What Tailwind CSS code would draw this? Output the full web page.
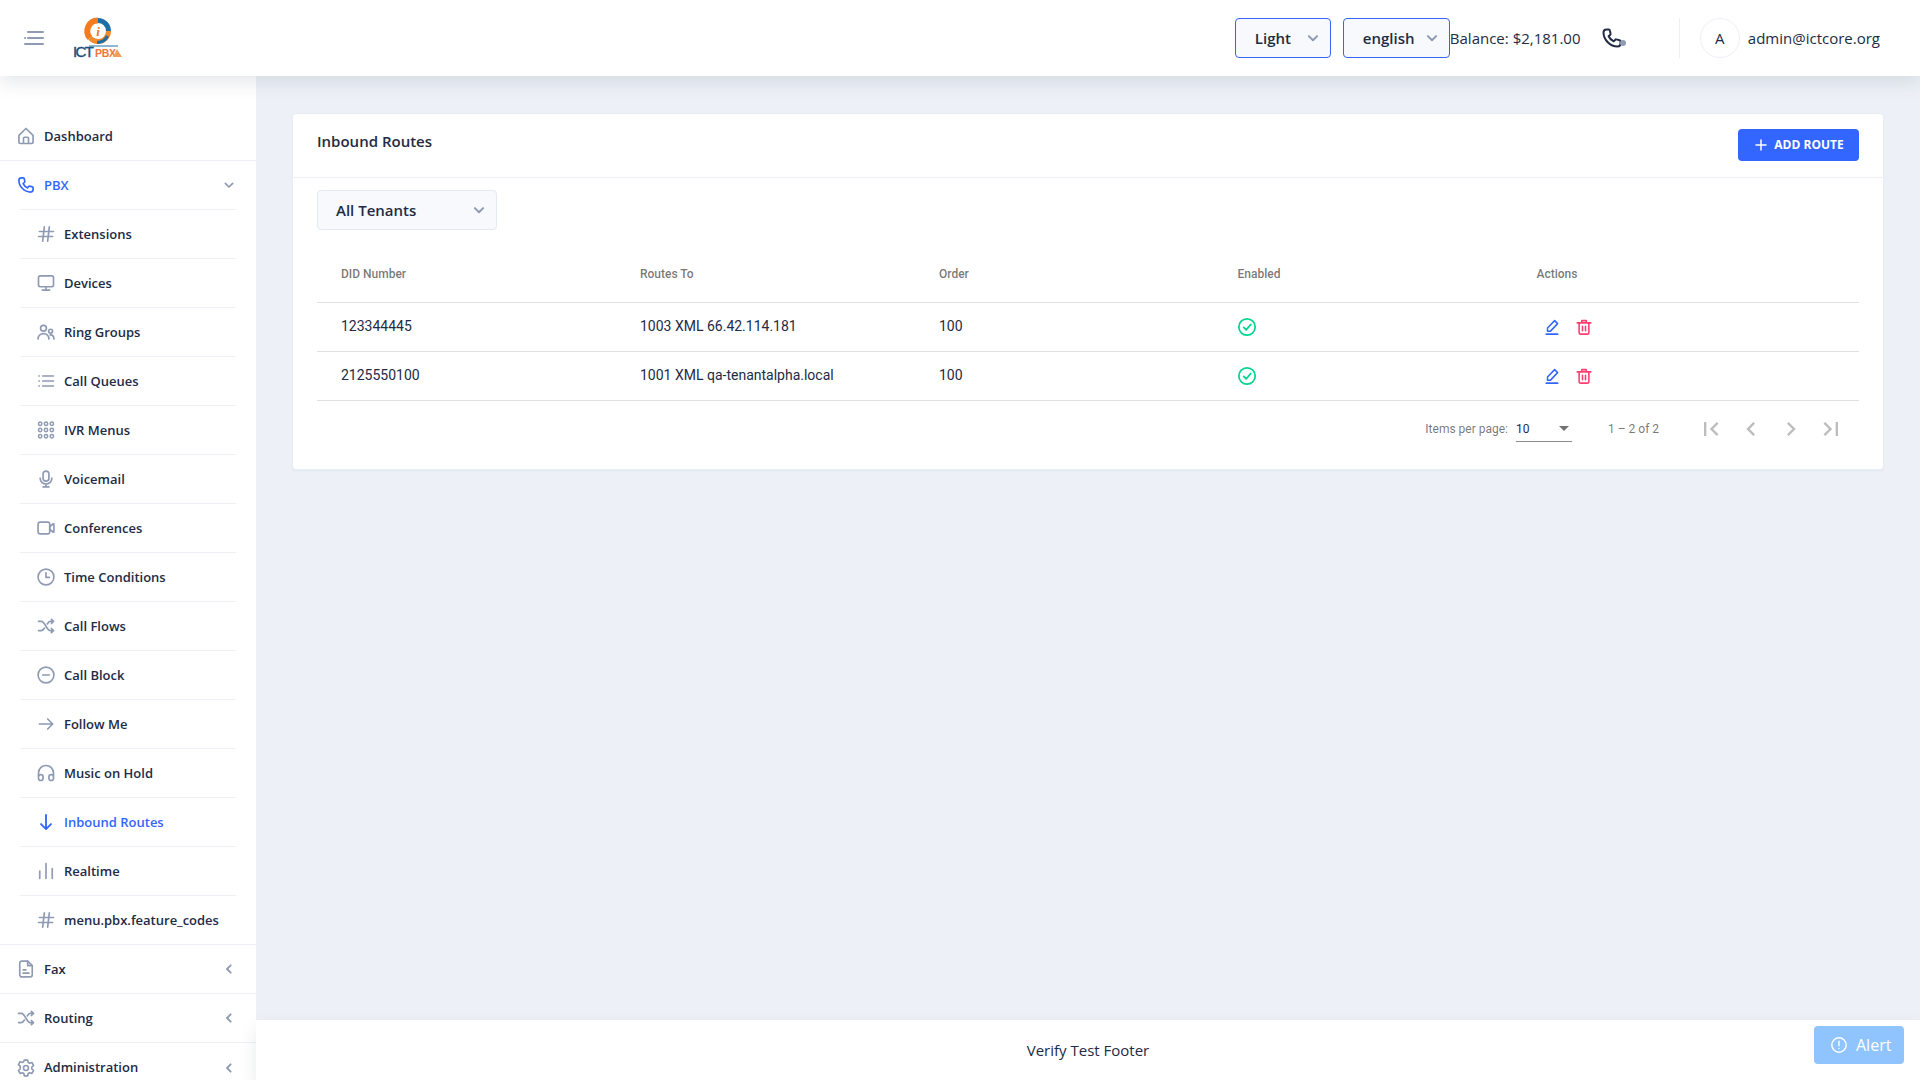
<!DOCTYPE html>
<html lang="en">
<head>
<meta charset="utf-8">
<title>Inbound Routes</title>
<script src="https://cdn.jsdelivr.net/npm/@tailwindcss/browser@4"></script>
</head>
<body class="h-screen w-screen overflow-hidden bg-[#edf1f7] font-['Open_Sans',sans-serif] text-[#222b45]">
<svg class="hidden" xmlns="http://www.w3.org/2000/svg">
  <defs>
    <symbol id="home" viewBox="0 0 24 24" fill="none" stroke="currentColor" stroke-width="2" stroke-linejoin="round"><path d="M3.500 11.200 12 3l8.500 8.200V19a2 2 0 0 1-2 2h-13a2 2 0 0 1-2-2z"/><path d="M9 21v-6.500a1 1 0 0 1 1-1h4a1 1 0 0 1 1 1V21"/></symbol>
    <symbol id="phone" viewBox="0 0 24 24" fill="none" stroke="currentColor" stroke-width="2" stroke-linejoin="round" stroke-linecap="round"><path d="M6.500 3.500h2.300a1 1 0 0 1 1 .8l.8 3.400a1 1 0 0 1-.3 1L8.600 10.300a11 11 0 0 0 5.100 5.100l1.600-1.700a1 1 0 0 1 1-.3l3.400.8a1 1 0 0 1 .8 1v2.300a3 3 0 0 1-3 3C10.200 20.500 3.500 13.800 3.500 6.500a3 3 0 0 1 3-3z"/></symbol>
    <symbol id="hash" viewBox="0 0 24 24" fill="none" stroke="currentColor" stroke-width="2" stroke-linecap="round"><path d="M4 9h17M3 15h17M10 3.500 8 20.500M16 3.500 14 20.500"/></symbol>
    <symbol id="monitor" viewBox="0 0 24 24" fill="none" stroke="currentColor" stroke-width="2" stroke-linecap="round" stroke-linejoin="round"><rect x="3" y="3.500" width="18" height="13" rx="2"/><path d="M12 16.500v4M7.500 20.500h9"/></symbol>
    <symbol id="people" viewBox="0 0 24 24" fill="none" stroke="currentColor" stroke-width="2" stroke-linecap="round"><circle cx="9" cy="7.500" r="3.500"/><circle cx="17.500" cy="11" r="2.300"/><path d="M2.500 20.500c0-4 2.800-6.500 6.500-6.500s6.500 2.500 6.500 6.500M17 15.500c2.800 0 4.500 2 4.500 5"/></symbol>
    <symbol id="list" viewBox="0 0 24 24" fill="none" stroke="currentColor" stroke-width="2" stroke-linecap="round"><path d="M8 6h13M8 12h13M8 18h13M3.500 6h.5M3.500 12h.5M3.500 18h.5"/></symbol>
    <symbol id="keypad" viewBox="0 0 24 24" fill="none" stroke="currentColor" stroke-width="1.800"><circle cx="5" cy="4.500" r="2"/><circle cx="12" cy="4.500" r="2"/><circle cx="19" cy="4.500" r="2"/><circle cx="5" cy="12" r="2"/><circle cx="12" cy="12" r="2"/><circle cx="19" cy="12" r="2"/><circle cx="5" cy="19.500" r="2"/><circle cx="12" cy="19.500" r="2"/><circle cx="19" cy="19.500" r="2"/></symbol>
    <symbol id="mic" viewBox="0 0 24 24" fill="none" stroke="currentColor" stroke-width="2" stroke-linecap="round"><rect x="8.500" y="2.500" width="7" height="12" rx="3.500"/><path d="M5 11a7 7 0 0 0 14 0M12 18v3.500M8.500 21.500h7"/></symbol>
    <symbol id="video" viewBox="0 0 24 24" fill="none" stroke="currentColor" stroke-width="2" stroke-linejoin="round"><rect x="2.500" y="5" width="14" height="14" rx="2.500"/><path d="M16.500 10.500 20 7.500a.8.8 0 0 1 1.500.6v7.800a.8.8 0 0 1-1.500.6l-3.500-3z"/></symbol>
    <symbol id="clock" viewBox="0 0 24 24" fill="none" stroke="currentColor" stroke-width="2" stroke-linecap="round" stroke-linejoin="round"><circle cx="12" cy="12" r="9.500"/><path d="M12 7v5.500h4"/></symbol>
    <symbol id="shuffle" viewBox="0 0 24 24" fill="none" stroke="currentColor" stroke-width="2" stroke-linecap="round" stroke-linejoin="round"><path d="M3 6.500h3.500c4 0 6.500 11 10.500 11h4M3 17.500h3.500c1.500 0 2.700-1.500 3.700-3M13.500 9.500c1-1.500 2.200-3 3.500-3h4M18.500 4l2.500 2.500L18.500 9M18.500 15l2.500 2.500-2.500 2.500"/></symbol>
    <symbol id="minus-circle" viewBox="0 0 24 24" fill="none" stroke="currentColor" stroke-width="2" stroke-linecap="round"><circle cx="12" cy="12" r="9.500"/><path d="M8 12h8"/></symbol>
    <symbol id="arrow-right" viewBox="0 0 24 24" fill="none" stroke="currentColor" stroke-width="2" stroke-linecap="round" stroke-linejoin="round"><path d="M4 12h16M14 6l6 6-6 6"/></symbol>
    <symbol id="arrow-down" viewBox="0 0 24 24" fill="none" stroke="currentColor" stroke-width="2.200" stroke-linecap="round" stroke-linejoin="round"><path d="M12 3.500v17M6 14.500l6 6 6-6"/></symbol>
    <symbol id="headphones" viewBox="0 0 24 24" fill="none" stroke="currentColor" stroke-width="2" stroke-linejoin="round"><path d="M3 16v-4a9 9 0 0 1 18 0v4"/><rect x="3" y="14" width="5.500" height="7" rx="2.700"/><rect x="15.500" y="14" width="5.500" height="7" rx="2.700"/></symbol>
    <symbol id="bars" viewBox="0 0 24 24" fill="none" stroke="currentColor" stroke-width="2" stroke-linecap="round"><path d="M4.500 12v9M12 3v18M19.500 9v12"/></symbol>
    <symbol id="file" viewBox="0 0 24 24" fill="none" stroke="currentColor" stroke-width="2" stroke-linecap="round" stroke-linejoin="round"><path d="M14 2.500H7A2.500 2.500 0 0 0 4.500 5v14A2.500 2.500 0 0 0 7 21.500h10a2.500 2.500 0 0 0 2.500-2.500V8z"/><path d="M14 2.500V8h5.500M8.500 13H12M8.500 17h7"/></symbol>
    <symbol id="gear" viewBox="0 0 24 24" fill="none" stroke="currentColor" stroke-width="2" stroke-linejoin="round"><circle cx="12" cy="12" r="3"/><path d="M10 2.500h4l.6 2.800 1.800 1 2.700-.9 2 3.500-2.100 1.900v2.300l2.100 1.900-2 3.500-2.700-.9-1.800 1-.6 2.800h-4l-.6-2.800-1.800-1-2.700.9-2-3.500 2.100-1.900V9.800L2.900 7.900l2-3.500 2.700.9 1.800-1z"/></symbol>
    <symbol id="chev-down" viewBox="0 0 24 24" fill="none" stroke="currentColor" stroke-width="2.600" stroke-linecap="round" stroke-linejoin="round"><path d="M6.500 9.500 12 15l5.500-5.500"/></symbol>
    <symbol id="chev-left" viewBox="0 0 24 24" fill="none" stroke="currentColor" stroke-width="2.800" stroke-linecap="round" stroke-linejoin="round"><path d="M14.500 6.500 9 12l5.500 5.500"/></symbol>
    <symbol id="edit" viewBox="0 0 24 24" fill="none" stroke="currentColor" stroke-width="2" stroke-linecap="round" stroke-linejoin="round"><path d="M4.500 21.500h15" stroke-width="2.400"/><path d="M6 17.500v-4.200L15.500 3.500l4 4L10 17.500z"/></symbol>
    <symbol id="trash" viewBox="0 0 24 24" fill="none" stroke="currentColor" stroke-width="2.100" stroke-linecap="round" stroke-linejoin="round"><path d="M3 6.500h18M9 6.500V3.500h6v3M5.500 6.500v13a2 2 0 0 0 2 2h9a2 2 0 0 0 2-2v-13M10 11v6M14 11v6"/></symbol>
    <symbol id="check" viewBox="0 0 24 24" fill="none" stroke="currentColor" stroke-width="2.100" stroke-linecap="round" stroke-linejoin="round"><circle cx="12" cy="12" r="9.800"/><path d="m8 12.500 3 3 5.500-6.500"/></symbol>
  </defs>
</svg>

<header class="relative z-20 flex h-[76px] items-center bg-white shadow-[0_8px_16px_0_rgba(44,51,73,0.1)]">
  <svg class="ml-[24px] h-[14px] w-[20px] text-[#8f9bb3]" viewBox="0 0 20 14" fill="none" stroke="currentColor" stroke-width="2" stroke-linecap="round"><path d="M4 1h15M1 7h.2M4 7h15M1 13h18"/></svg>
  <svg class="ml-[29px] h-[42px] w-[50px]" viewBox="0 0 50 42">
    <path d="M25 3.500a10.500 10.500 0 0 0-8 17.500" fill="none" stroke="#f47b20" stroke-width="6"/>
    <path d="M25 3.500a10.500 10.500 0 0 1 10.500 10.500" fill="none" stroke="#1c6ea4" stroke-width="5"/>
    <path d="M35.500 14c0 6-5 11-11 10.500-3 0-5.500-1.500-7.500-3.500" fill="none" stroke="#f08a2c" stroke-width="5"/>
    <path d="M34.500 19c-2 4-6 6.500-10.500 6.500" fill="none" stroke="#1c6ea4" stroke-width="3"/>
    <circle cx="25" cy="14" r="6.500" fill="#fff"/>
    <text x="25" y="18.500" text-anchor="middle" font-family="Liberation Serif" font-style="italic" font-weight="700" font-size="13" fill="#e8791f">i</text>
    <text x="0" y="40" font-family="Liberation Sans" font-weight="400" font-size="15" fill="#1f4e79" textLength="21" stroke="#1f4e79" stroke-width=".4">ICT</text>
    <path d="M16 29h29" stroke="#1f6ea4" stroke-width="1"/>
    <text x="22" y="40" font-family="Liberation Sans" font-weight="700" font-size="10.500" fill="#f0743a" textLength="21">PBX</text>
    <path d="M40 40l4-8 5 8z" fill="#f0a05a"/>
  </svg>
  <div class="ml-auto flex h-[40px] items-center">
    <div class="flex h-[40px] w-[96px] items-center justify-between rounded-[4px] border border-[#3366ff] bg-[#f7f9fc] pl-[19px] pr-[8px] text-[15px] font-semibold">Light<svg class="h-[18px] w-[18px] text-[#8f9bb3]"><use href="#chev-down"/></svg></div>
    <div class="ml-[12px] flex h-[40px] w-[107px] items-center justify-between rounded-[4px] border border-[#3366ff] bg-[#f7f9fc] pl-[19px] pr-[8px] text-[15px] font-semibold">english<svg class="h-[18px] w-[18px] text-[#8f9bb3]"><use href="#chev-down"/></svg></div>
    <span class="w-[131px] whitespace-nowrap text-[15px]">Balance: $2,181.00</span>
    <div class="relative ml-[19px] h-[24px] w-[26px]">
      <svg class="h-[24px] w-[24px] text-[#222b45]"><use href="#phone"/></svg>
      <span class="absolute bottom-[4px] right-0 h-[6px] w-[6px] rounded-full bg-[#8f9bb3]"></span>
    </div>
    <div class="ml-[53px] h-[40px] border-l border-[#edf1f7]"></div>
    <div class="ml-[20px] flex h-[40px] w-[40px] items-center justify-center rounded-full border border-[#edf1f7] text-[15px]">A</div>
    <span class="ml-[8px] mr-[40px] whitespace-nowrap text-[15px] text-[#222b45]">admin@ictcore.org</span>
  </div>
</header>

<div class="flex h-[1004px]">
  <aside class="z-0 w-[256px] shrink-0 overflow-hidden bg-white pt-[36px] text-[13px] font-semibold">
    <div class="flex h-[49px] items-center border-b border-[#edf1f7] pl-[16px] pr-[19px]">
      <svg class="h-[20px] w-[20px] text-[#8f9bb3]"><use href="#home"/></svg><span class="ml-[8px] pt-[2px]">Dashboard</span>
    </div>
    <div class="flex h-[48px] items-center pl-[16px] pr-[19px] text-[#3366ff]">
      <svg class="h-[20px] w-[20px]"><use href="#phone"/></svg><span class="ml-[8px] pt-[2px]">PBX</span>
      <svg class="ml-auto h-[16px] w-[16px] text-[#8f9bb3]"><use href="#chev-down"/></svg>
    </div>
    <ul class="border-b border-[#edf1f7]">
      <li class="mx-[20px] flex h-[49px] items-center border-t border-[#edf1f7] pl-[16px]"><svg class="h-[20px] w-[20px] text-[#8f9bb3]"><use href="#hash"/></svg><span class="ml-[8px] pt-[2px]">Extensions</span></li>
      <li class="mx-[20px] flex h-[49px] items-center border-t border-[#edf1f7] pl-[16px]"><svg class="h-[20px] w-[20px] text-[#8f9bb3]"><use href="#monitor"/></svg><span class="ml-[8px] pt-[2px]">Devices</span></li>
      <li class="mx-[20px] flex h-[49px] items-center border-t border-[#edf1f7] pl-[16px]"><svg class="h-[20px] w-[20px] text-[#8f9bb3]"><use href="#people"/></svg><span class="ml-[8px] pt-[2px]">Ring Groups</span></li>
      <li class="mx-[20px] flex h-[49px] items-center border-t border-[#edf1f7] pl-[16px]"><svg class="h-[20px] w-[20px] text-[#8f9bb3]"><use href="#list"/></svg><span class="ml-[8px] pt-[2px]">Call Queues</span></li>
      <li class="mx-[20px] flex h-[49px] items-center border-t border-[#edf1f7] pl-[16px]"><svg class="h-[20px] w-[20px] text-[#8f9bb3]"><use href="#keypad"/></svg><span class="ml-[8px] pt-[2px]">IVR Menus</span></li>
      <li class="mx-[20px] flex h-[49px] items-center border-t border-[#edf1f7] pl-[16px]"><svg class="h-[20px] w-[20px] text-[#8f9bb3]"><use href="#mic"/></svg><span class="ml-[8px] pt-[2px]">Voicemail</span></li>
      <li class="mx-[20px] flex h-[49px] items-center border-t border-[#edf1f7] pl-[16px]"><svg class="h-[20px] w-[20px] text-[#8f9bb3]"><use href="#video"/></svg><span class="ml-[8px] pt-[2px]">Conferences</span></li>
      <li class="mx-[20px] flex h-[49px] items-center border-t border-[#edf1f7] pl-[16px]"><svg class="h-[20px] w-[20px] text-[#8f9bb3]"><use href="#clock"/></svg><span class="ml-[8px] pt-[2px]">Time Conditions</span></li>
      <li class="mx-[20px] flex h-[49px] items-center border-t border-[#edf1f7] pl-[16px]"><svg class="h-[20px] w-[20px] text-[#8f9bb3]"><use href="#shuffle"/></svg><span class="ml-[8px] pt-[2px]">Call Flows</span></li>
      <li class="mx-[20px] flex h-[49px] items-center border-t border-[#edf1f7] pl-[16px]"><svg class="h-[20px] w-[20px] text-[#8f9bb3]"><use href="#minus-circle"/></svg><span class="ml-[8px] pt-[2px]">Call Block</span></li>
      <li class="mx-[20px] flex h-[49px] items-center border-t border-[#edf1f7] pl-[16px]"><svg class="h-[20px] w-[20px] text-[#8f9bb3]"><use href="#arrow-right"/></svg><span class="ml-[8px] pt-[2px]">Follow Me</span></li>
      <li class="mx-[20px] flex h-[49px] items-center border-t border-[#edf1f7] pl-[16px]"><svg class="h-[20px] w-[20px] text-[#8f9bb3]"><use href="#headphones"/></svg><span class="ml-[8px] pt-[2px]">Music on Hold</span></li>
      <li class="mx-[20px] flex h-[49px] items-center border-t border-[#edf1f7] pl-[16px] text-[#3366ff]"><svg class="h-[20px] w-[20px]"><use href="#arrow-down"/></svg><span class="ml-[8px] pt-[2px]">Inbound Routes</span></li>
      <li class="mx-[20px] flex h-[49px] items-center border-t border-[#edf1f7] pl-[16px]"><svg class="h-[20px] w-[20px] text-[#8f9bb3]"><use href="#bars"/></svg><span class="ml-[8px] pt-[2px]">Realtime</span></li>
      <li class="mx-[20px] flex h-[49px] items-center border-t border-[#edf1f7] pl-[16px]"><svg class="h-[20px] w-[20px] text-[#8f9bb3]"><use href="#hash"/></svg><span class="ml-[8px] pt-[2px]">menu.pbx.feature_codes</span></li>
    </ul>
    <div class="flex h-[49px] items-center border-b border-[#edf1f7] pl-[16px] pr-[19px]"><svg class="h-[20px] w-[20px] text-[#8f9bb3]"><use href="#file"/></svg><span class="ml-[8px] pt-[2px]">Fax</span><svg class="ml-auto h-[16px] w-[16px] text-[#8f9bb3]"><use href="#chev-left"/></svg></div>
    <div class="flex h-[49px] items-center border-b border-[#edf1f7] pl-[16px] pr-[19px]"><svg class="h-[20px] w-[20px] text-[#8f9bb3]"><use href="#shuffle"/></svg><span class="ml-[8px] pt-[2px]">Routing</span><svg class="ml-auto h-[16px] w-[16px] text-[#8f9bb3]"><use href="#chev-left"/></svg></div>
    <div class="flex h-[49px] items-center pl-[16px] pr-[19px]"><svg class="h-[20px] w-[20px] text-[#8f9bb3]"><use href="#gear"/></svg><span class="ml-[8px]">Administration</span><svg class="ml-auto h-[16px] w-[16px] text-[#8f9bb3]"><use href="#chev-left"/></svg></div>
  </aside>

  <div class="flex min-w-0 flex-1 flex-col">
    <main class="flex-1 px-[36px] pt-[37px]">
      <section class="h-[357px] rounded-[4px] border border-[#e8ecf3] bg-white shadow-[0_1px_2px_rgba(44,51,73,0.05)]">
        <div class="flex h-[64px] items-start justify-between border-b border-[#edf1f7] pl-[24px] pr-[24px] pt-[15px]">
          <h1 class="text-[15px] font-semibold leading-[24px]">Inbound Routes</h1>
          <button class="flex h-[32px] w-[121px] items-center justify-center gap-[7px] rounded-[4px] bg-[#3366ff] pl-[2px] text-[12px] font-bold text-white">
            <svg class="h-[12px] w-[12px]" viewBox="0 0 12 12" fill="none" stroke="currentColor" stroke-width="1.500" stroke-linecap="round"><path d="M6 1v10M1 6h10"/></svg>ADD ROUTE
          </button>
        </div>
        <div class="px-[24px] pt-[12px]">
          <div class="flex h-[40px] w-[180px] items-center justify-between rounded-[4px] border border-[#e4e9f2] bg-[#f7f9fc] pl-[18px] pr-[8px] text-[15px] font-semibold">All Tenants<svg class="h-[18px] w-[18px] text-[#8f9bb3]"><use href="#chev-down"/></svg></div>
          <div class="mt-[16px] font-['Roboto',sans-serif]">
            <div class="grid h-[57px] grid-cols-[299px_299px_298.500px_299px_1fr] items-center border-b border-[#e0e0e0] pb-[1px] pl-[24px] text-[12px] font-medium text-black/55">
              <span>DID Number</span><span>Routes To</span><span>Order</span><span>Enabled</span><span>Actions</span>
            </div>
            <div class="grid h-[49px] grid-cols-[299px_299px_298.500px_299px_1fr] items-center border-b border-[#e0e0e0] pl-[24px] text-[14px] text-[#222b45]">
              <span class="pb-[2px]">123344445</span><span class="pb-[2px]">1003 XML 66.42.114.181</span><span class="pb-[2px]">100</span>
              <svg class="-ml-[1px] h-[20px] w-[20px] text-[#00d68f]"><use href="#check"/></svg>
              <span class="flex items-center gap-[14px] pl-[6px]"><svg class="h-[18px] w-[18px] text-[#3366ff]"><use href="#edit"/></svg><svg class="h-[18px] w-[18px] text-[#ff3d71]"><use href="#trash"/></svg></span>
            </div>
            <div class="grid h-[49px] grid-cols-[299px_299px_298.500px_299px_1fr] items-center border-b border-[#e0e0e0] pl-[24px] text-[14px] text-[#222b45]">
              <span class="pb-[2px]">2125550100</span><span class="pb-[2px]">1001 XML qa-tenantalpha.local</span><span class="pb-[2px]">100</span>
              <svg class="-ml-[1px] h-[20px] w-[20px] text-[#00d68f]"><use href="#check"/></svg>
              <span class="flex items-center gap-[14px] pl-[6px]"><svg class="h-[18px] w-[18px] text-[#3366ff]"><use href="#edit"/></svg><svg class="h-[18px] w-[18px] text-[#ff3d71]"><use href="#trash"/></svg></span>
            </div>
            <div class="flex h-[56px] items-center justify-end pr-[8px] text-[12px] text-black/55">
              <span>Items per page:</span>
              <div class="relative ml-[8px] flex h-[26px] w-[56px] items-center justify-between border-b border-black/45 pr-[3px] text-[12px] text-[#222b45]">10
                <span class="h-0 w-0 border-x-[5px] border-t-[5px] border-x-transparent border-t-black/55"></span>
              </div>
              <span class="ml-[36px] w-[52px]">1 – 2 of 2</span>
              <div class="ml-[31px] flex text-[#bdbdbd]">
                <span class="flex h-[40px] w-[40px] items-center justify-center"><svg class="h-[28px] w-[28px]" viewBox="0 0 24 24" fill="currentColor"><path d="M18.410 16.590 13.820 12l4.590-4.590L17 6l-6 6 6 6zM6 6h2v12H6z"/></svg></span>
                <span class="flex h-[40px] w-[40px] items-center justify-center"><svg class="h-[28px] w-[28px]" viewBox="0 0 24 24" fill="currentColor"><path d="M15.410 7.410 14 6l-6 6 6 6 1.410-1.410L10.830 12z"/></svg></span>
                <span class="flex h-[40px] w-[40px] items-center justify-center"><svg class="h-[28px] w-[28px]" viewBox="0 0 24 24" fill="currentColor"><path d="M10 6 8.590 7.410 13.170 12l-4.580 4.590L10 18l6-6z"/></svg></span>
                <span class="flex h-[40px] w-[40px] items-center justify-center"><svg class="h-[28px] w-[28px]" viewBox="0 0 24 24" fill="currentColor"><path d="M5.590 7.410 10.180 12l-4.590 4.590L7 18l6-6-6-6zM16 6h2v12h-2z"/></svg></span>
              </div>
            </div>
          </div>
        </div>
      </section>
    </main>
    <footer class="relative z-10 flex h-[60px] shrink-0 items-center justify-center bg-white text-[15px] shadow-[0_8px_16px_0_rgba(44,51,73,0.1)]">Verify Test Footer</footer>
  </div>
</div>

<div class="absolute left-[1814px] top-[1026px] z-30 flex h-[38px] w-[90px] items-center gap-[9px] rounded-[4px] bg-[#8fc4ff] pl-[17px] text-[16px] font-medium text-white">
  <svg class="h-[16px] w-[16px]" viewBox="0 0 16 16" fill="none" stroke="currentColor" stroke-width="1.400" stroke-linecap="round"><circle cx="8" cy="8" r="7.200"/><path d="M8 4.300v4.500M8 11.500v.1"/></svg>Alert
</div>
</body>
</html>
